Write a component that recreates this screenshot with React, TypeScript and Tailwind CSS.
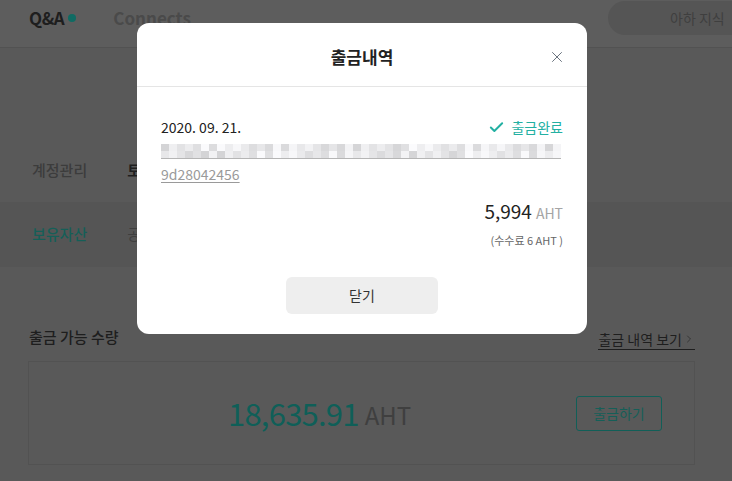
import { Check, X, ChevronRight } from "lucide-react";

const font = { fontFamily: '"Noto Sans CJK KR", "Noto Sans", sans-serif' };

// blurred wallet address, drawn as a mosaic of gray blocks
const mosaic = Array.from({ length: 100 }, (_, i) => {
    const v = Math.floor(212 + ((i * 37 + (i % 7) * 11 + (i % 3) * 19) % 40));
    return `rgb(${v},${v},${v + 2})`;
});

const App: React.FC = () => {
    return (
        <div className="relative w-[732px] h-[481px] overflow-hidden bg-[#595959]" style={font}>
            {/* header (dimmed) */}
            <div className="h-12 flex items-center bg-[#5d5d5d] border-b border-[#525252] pl-[29px] pb-[11px]">
                <span className="text-[17px] font-bold text-[#1e1e1e] tracking-tight">Q&amp;A</span>
                <span className="ml-1 w-2 h-2 rounded-full bg-[#0f6b63]" />
                <span className="ml-[37px] text-[17px] font-bold text-[#4a4a4a]">Connects</span>
                <div className="ml-auto mr-[-20px] w-[144px] h-[34px] rounded-full bg-[#555555] flex items-center pl-[62px]">
                    <span className="text-[14px] text-[#3f3f3f] whitespace-nowrap">아하 지식</span>
                </div>
            </div>

            {/* tabs */}
            <div className="h-[154px] flex items-end pb-[21px] pl-8 gap-10 text-[15px]">
                <span className="text-[#3c3c3c] font-medium">계정관리</span>
                <span className="text-[#1f1f1f] font-bold">토큰</span>
            </div>
            <div className="h-[65px] flex items-center pl-8 gap-10 text-[15px] bg-[#555555]">
                <span className="text-[#155f58] font-medium">보유자산</span>
                <span className="text-[#3f3f3f]">공지</span>
            </div>

            {/* withdrawable amount */}
            <div className="pl-[28px] pr-[37px] pt-[58px]">
                <div className="flex items-center justify-between">
                    <span className="pl-px text-[15px] font-medium text-[#1e1e1e]">출금 가능 수량</span>
                    <span className="flex items-center text-[14px] text-[#1e1e1e] border-b border-[#1e1e1e] leading-5 mt-1">
                        출금 내역 보기
                        <ChevronRight size={12} strokeWidth={1.2} className="ml-px" />
                    </span>
                </div>
                <div className="mt-[11px] h-[104px] border border-[#525252] flex items-center pl-[199px] pr-[32px]">
                    <span className="text-[31px] text-[#0f5f58] tracking-tight">18,635.91</span>
                    <span className="ml-1.5 text-[24px] text-[#3f3f3f] mt-1">AHT</span>
                    <button className="ml-auto w-[86px] h-[35px] border border-[#115f58] rounded-[3px] text-[14px] text-[#155f58]">
                        출금하기
                    </button>
                </div>
            </div>

            {/* modal */}
            <div className="absolute left-[137px] top-[23px] w-[450px] bg-white rounded-[12px]">
                <div className="relative h-16 flex items-center justify-center border-b border-[#e5e5e5]">
                    <span className="text-[17px] font-bold text-[#222] mt-1">출금내역</span>
                    <X size={18} strokeWidth={1.2} className="absolute right-[21px] top-[25px] text-[#5a6470]" />
                </div>
                <div className="px-6 pt-[30px] pb-5">
                    <div className="flex items-center justify-between h-5">
                        <span className="text-[14px] text-[#222]">2020. 09. 21.</span>
                        <span className="flex items-center text-[14px] text-[#23b0a2]">
                            <Check size={17} strokeWidth={2.8} className="mr-1.5" />
                            출금완료
                        </span>
                    </div>
                    <div className="mt-[7px] w-[400px] h-[15px] border-b border-[#b5b5b5] flex flex-wrap content-start">
                        {mosaic.map((c, i) => (
                            <div key={i} className="w-2 h-[7px]" style={{ backgroundColor: c }} />
                        ))}
                    </div>
                    <div className="mt-1 leading-5">
                        <span className="text-[14px] text-[#9a9a9a] underline underline-offset-2">9d28042456</span>
                    </div>
                    <div className="mt-4 flex items-baseline justify-end leading-[22px]">
                        <span className="text-[19px] text-[#222]">5,994</span>
                        <span className="ml-1 text-[14px] text-[#a5a5a5]">AHT</span>
                    </div>
                    <div className="mt-2 text-right text-[11px] leading-4 text-[#666]">(수수료 6 AHT )</div>
                    <div className="mt-[29px] flex justify-center">
                        <button className="w-[152px] h-[37px] rounded-md bg-[#eeeeee] text-[14px] text-[#333]">닫기</button>
                    </div>
                </div>
            </div>
        </div>
    );
};

export default App;
